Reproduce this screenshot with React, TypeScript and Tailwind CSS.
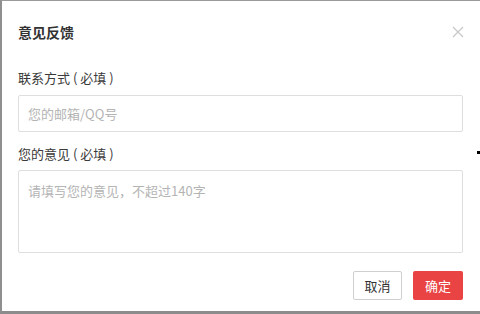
import React from 'react';

// Feedback dialog: title, two required fields and a cancel / confirm footer.

export default function App() {
  return (
    <div
      className="relative flex h-[314px] w-[480px] flex-col border-t border-b-[3px] border-l-2 border-t-[#9a9a9a] border-b-[#8c8c8c] border-l-[#8f8f8f] bg-white text-[#333]"
      style={{ fontFamily: '"Noto Sans CJK SC", "Noto Sans", sans-serif' }}
    >
      <div className="flex items-center justify-between pl-4 pr-[16px] pt-[21px]">
        <h1 className="text-[14px] font-bold leading-[20px] text-[#333]">意见反馈</h1>
        <button className="text-[#c8c8c8]" aria-label="关闭">
          <svg width="12" height="12" viewBox="0 0 12 12" fill="none" stroke="currentColor" strokeWidth="1.3">
            <path d="M1 1l10 10M11 1L1 11" />
          </svg>
        </button>
      </div>

      <label className="mt-[27px] pl-4 text-[13px] leading-[18px] text-[#3a3a3a]">联系方式 ( 必填 )</label>
      <div className="ml-4 mr-[17px] mt-[8px]">
        <input
          className="h-[37px] w-full rounded-[2px] border border-[#dedede] px-[9px] text-[13px] outline-none placeholder:text-[#b4b4b4]"
          placeholder="您的邮箱/QQ号"
        />
      </div>

      <label className="mt-[13px] pl-4 text-[13px] leading-[18px] text-[#3a3a3a]">您的意见 ( 必填 )</label>
      <div className="ml-4 mr-[17px] mt-[7px]">
        <textarea
          className="block h-[83px] w-full resize-none rounded-[2px] border border-[#dedede] px-[9px] py-[11px] text-[13px] leading-[18px] outline-none placeholder:text-[#b4b4b4]"
          placeholder="请填写您的意见，不超过140字"
        />
      </div>

      <div className="mr-[17px] mt-[18px] flex justify-end gap-[11px]">
        <button className="h-[29px] w-[49px] rounded-[2px] border border-[#cfcfcf] bg-white text-[13px] text-[#333]">
          取消
        </button>
        <button className="h-[29px] w-[50px] rounded-[2px] bg-[#e94343] text-[13px] text-white">确定</button>
      </div>

      <span className="absolute right-0 top-[150px] h-[3px] w-[3px] bg-black" />
    </div>
  );
}
